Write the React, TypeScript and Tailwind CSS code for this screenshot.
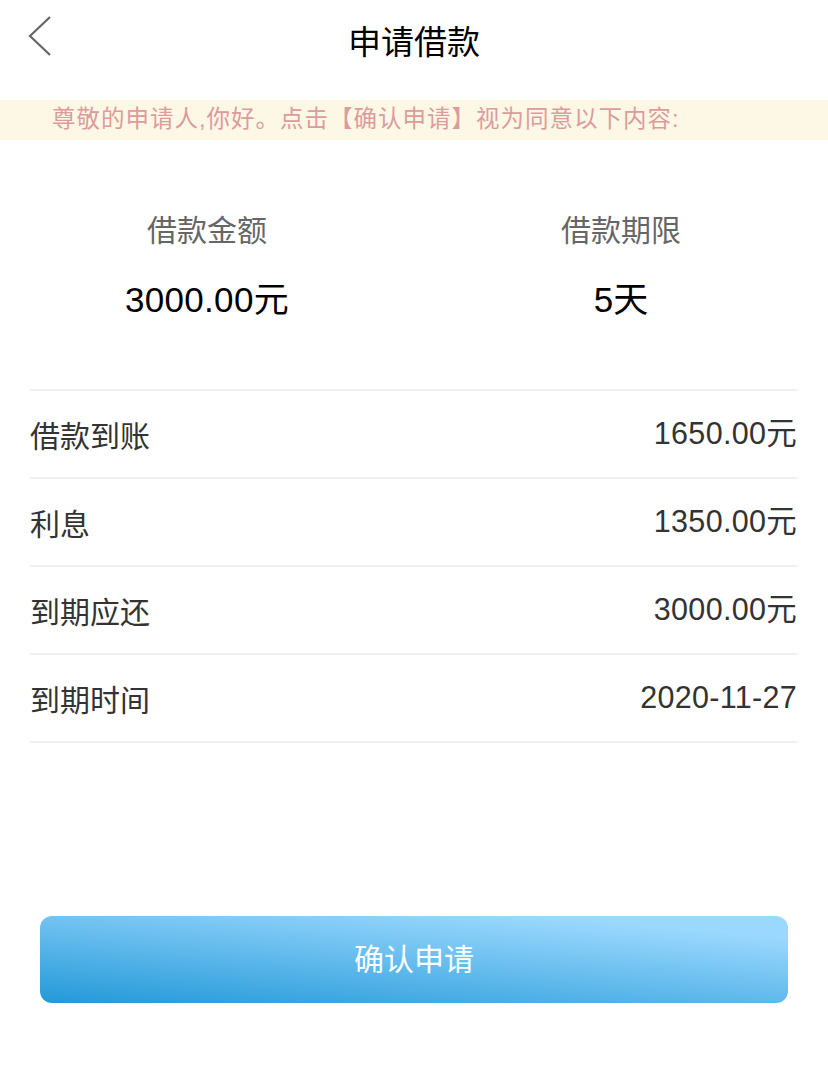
import React from "react";

const font = "font-['Liberation_Sans','Noto_Sans_CJK_SC',sans-serif]";

const rows = [
  { label: "借款到账", value: "1650.00元" },
  { label: "利息", value: "1350.00元" },
  { label: "到期应还", value: "3000.00元" },
  { label: "到期时间", value: "2020-11-27" },
];

export default function App() {
  return (
    <div className={`w-[828px] h-[1091px] bg-white ${font} flex flex-col`}>
      {/* Header */}
      <div className="relative h-[84px] flex items-center justify-center">
        <svg
          className="absolute left-[26px] top-[14px]"
          width="30"
          height="44"
          viewBox="0 0 30 44"
          fill="none"
        >
          <path d="M24 3 L4 22 L24 41" stroke="#666666" strokeWidth="2.2" />
        </svg>
        <div className="text-[33px] text-black leading-none">申请借款</div>
      </div>

      {/* Notice band */}
      <div className="mt-[16px] h-[40px] bg-[#fdf7e6] flex items-center pl-[52px]">
        <span className="text-[23.5px] tracking-[1px] text-[#dc9c9c] leading-none">
          尊敬的申请人,你好。点击【确认申请】视为同意以下内容:
        </span>
      </div>

      {/* Summary */}
      <div className="grid grid-cols-2 pt-[72px] h-[249px]">
        <div className="flex flex-col items-center">
          <div className="text-[30px] leading-[38px] text-[#666666]">借款金额</div>
          <div className="mt-[31px] text-[35px] tracking-[0.3px] leading-[38px] text-black">3000.00元</div>
        </div>
        <div className="flex flex-col items-center">
          <div className="text-[30px] leading-[38px] text-[#666666]">借款期限</div>
          <div className="mt-[31px] text-[35px] leading-[38px] text-black">5天</div>
        </div>
      </div>

      {/* Rows */}
      <div className="mx-[30px] mr-[31px] border-b-2 border-[#f0f0f0]">
        {rows.map((r) => (
          <div
            key={r.label}
            className="h-[88px] border-t-2 border-[#f0f0f0] flex items-center justify-between"
          >
            <span className="pt-[4px] text-[30px] text-[#333333]">{r.label}</span>
            <span className="text-[30.5px] tracking-[0.3px] text-[#333333]">{r.value}</span>
          </div>
        ))}
      </div>

      {/* Button */}
      <div className="mt-[173px] px-[40px]">
        <button className="w-[748px] h-[87px] rounded-[12px] bg-[linear-gradient(185deg,#9ad8fe_15%,#2399d8_100%)] text-white text-[30px] flex items-center justify-center">
          确认申请
        </button>
      </div>
    </div>
  );
}
